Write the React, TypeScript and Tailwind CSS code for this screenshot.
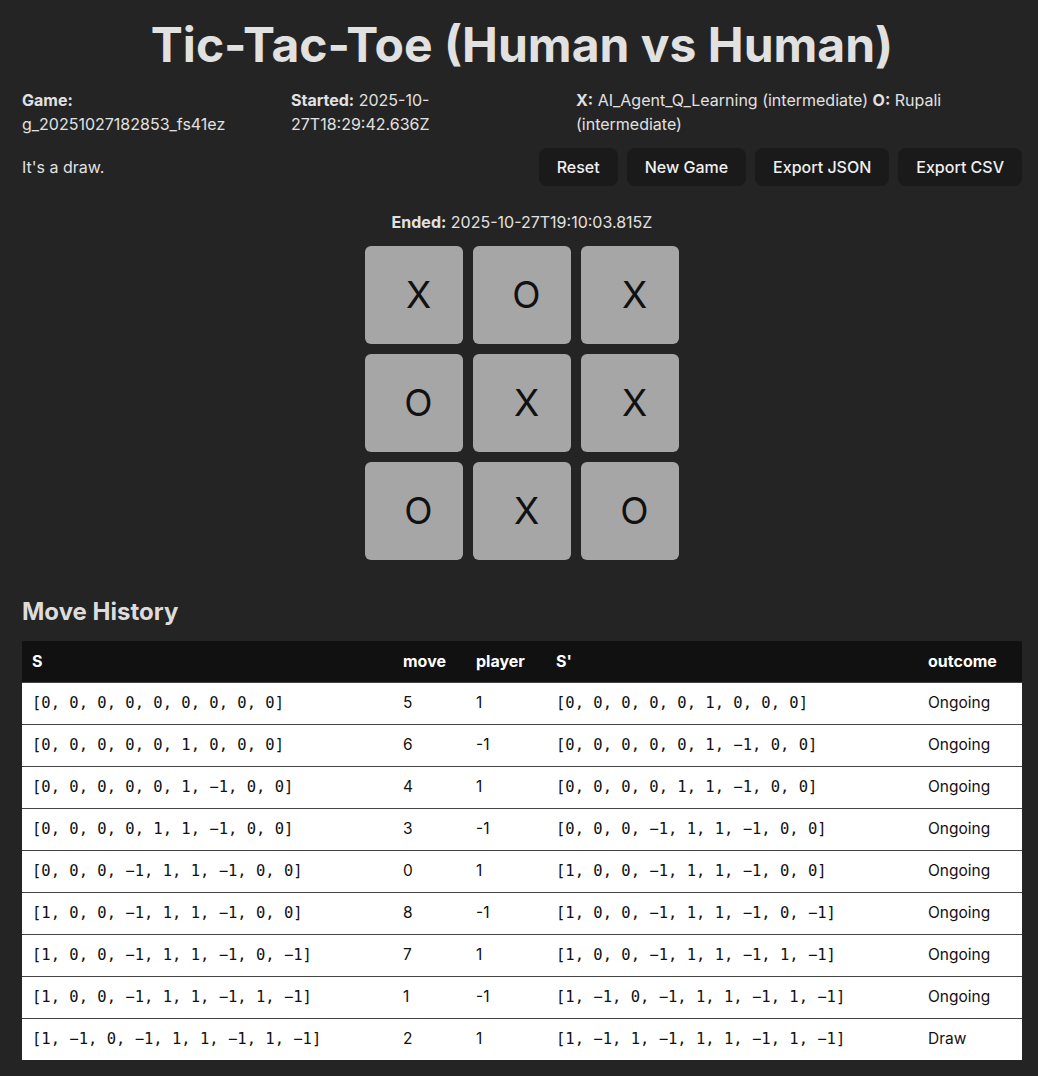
import React from "react";

const board = ["X", "O", "X", "O", "X", "X", "O", "X", "O"];

const moves = [
  { s: "[0, 0, 0, 0, 0, 0, 0, 0, 0]", move: 5, player: "1", s2: "[0, 0, 0, 0, 0, 1, 0, 0, 0]", outcome: "Ongoing" },
  { s: "[0, 0, 0, 0, 0, 1, 0, 0, 0]", move: 6, player: "-1", s2: "[0, 0, 0, 0, 0, 1, −1, 0, 0]", outcome: "Ongoing" },
  { s: "[0, 0, 0, 0, 0, 1, −1, 0, 0]", move: 4, player: "1", s2: "[0, 0, 0, 0, 1, 1, −1, 0, 0]", outcome: "Ongoing" },
  { s: "[0, 0, 0, 0, 1, 1, −1, 0, 0]", move: 3, player: "-1", s2: "[0, 0, 0, −1, 1, 1, −1, 0, 0]", outcome: "Ongoing" },
  { s: "[0, 0, 0, −1, 1, 1, −1, 0, 0]", move: 0, player: "1", s2: "[1, 0, 0, −1, 1, 1, −1, 0, 0]", outcome: "Ongoing" },
  { s: "[1, 0, 0, −1, 1, 1, −1, 0, 0]", move: 8, player: "-1", s2: "[1, 0, 0, −1, 1, 1, −1, 0, −1]", outcome: "Ongoing" },
  { s: "[1, 0, 0, −1, 1, 1, −1, 0, −1]", move: 7, player: "1", s2: "[1, 0, 0, −1, 1, 1, −1, 1, −1]", outcome: "Ongoing" },
  { s: "[1, 0, 0, −1, 1, 1, −1, 1, −1]", move: 1, player: "-1", s2: "[1, −1, 0, −1, 1, 1, −1, 1, −1]", outcome: "Ongoing" },
  { s: "[1, −1, 0, −1, 1, 1, −1, 1, −1]", move: 2, player: "1", s2: "[1, −1, 1, −1, 1, 1, −1, 1, −1]", outcome: "Draw" },
];

const mono = "font-['DejaVu_Sans_Mono',monospace] text-[15.5px]";

export default function App() {
  return (
    <div className="min-h-[1076px] bg-[#242424] text-[#e1e1e1] font-['Inter',sans-serif] text-[16px] leading-6">
      <div className="w-[1000px] ml-[22px] pt-[14px] pb-[16px]">
        <h1 className="text-center text-[48px] font-bold leading-[62px]">
          Tic-Tac-Toe (Human vs Human)
        </h1>

        <div className="flex mt-[12px]">
          <div className="w-[215px] mr-[54px]">
            <b>Game:</b> g_20251027182853_fs41ez
          </div>
          <div className="w-[150px] mr-[135px]">
            <b>Started:</b> 2025-10-27T18:29:42.636Z
          </div>
          <div className="flex-1">
            <b>X:</b> AI_Agent_Q_Learning (intermediate) <b>O:</b> Rupali (intermediate)
          </div>
        </div>

        <div className="flex items-center justify-between mt-[12px]">
          <div>It's a draw.</div>
          <div className="flex gap-[9px]">
            {["Reset", "New Game", "Export JSON", "Export CSV"].map((b) => (
              <button
                key={b}
                className="bg-[#1a1a1a] rounded-[8px] px-[18px] py-[7px] font-medium text-[16px] leading-6 text-[#f0f0f0]"
              >
                {b}
              </button>
            ))}
          </div>
        </div>

        <div className="text-center mt-[24px]">
          <b>Ended:</b> 2025-10-27T19:10:03.815Z
        </div>

        <div className="flex justify-center mt-[12px]">
          <div className="grid grid-cols-[98px_98px_98px] gap-[10px]">
            {board.map((c, i) => (
              <div
                key={i}
                className="h-[98px] rounded-[6px] bg-[#a6a6a6] flex items-center justify-center pl-[9px] text-[37px] text-[#111]"
              >
                {c}
              </div>
            ))}
          </div>
        </div>

        <h2 className="mt-[36px] text-[24px] font-bold leading-8 text-[#dcdcdc]">Move History</h2>

        <table className="mt-[13px] w-[1000px] table-fixed border-collapse">
          <colgroup>
            <col className="w-[371px]" />
            <col className="w-[73px]" />
            <col className="w-[80px]" />
            <col className="w-[372px]" />
            <col className="w-[104px]" />
          </colgroup>
          <thead>
            <tr className="bg-[#111111] text-white">
              {["S", "move", "player", "S'", "outcome"].map((h) => (
                <th key={h} className="h-[41px] px-[10px] text-left font-bold text-[16px]">
                  {h}
                </th>
              ))}
            </tr>
          </thead>
          <tbody className="bg-white text-[#111] text-[15.5px]">
            {moves.map((m, i) => (
              <tr key={i} className="border-t border-[#444]">
                <td className={`h-[42px] px-[10px] ${mono}`}>{m.s}</td>
                <td className="px-[10px]">{m.move}</td>
                <td className="px-[10px]">{m.player}</td>
                <td className={`px-[10px] ${mono}`}>{m.s2}</td>
                <td className="px-[10px]">{m.outcome}</td>
              </tr>
            ))}
          </tbody>
        </table>
      </div>
    </div>
  );
}
